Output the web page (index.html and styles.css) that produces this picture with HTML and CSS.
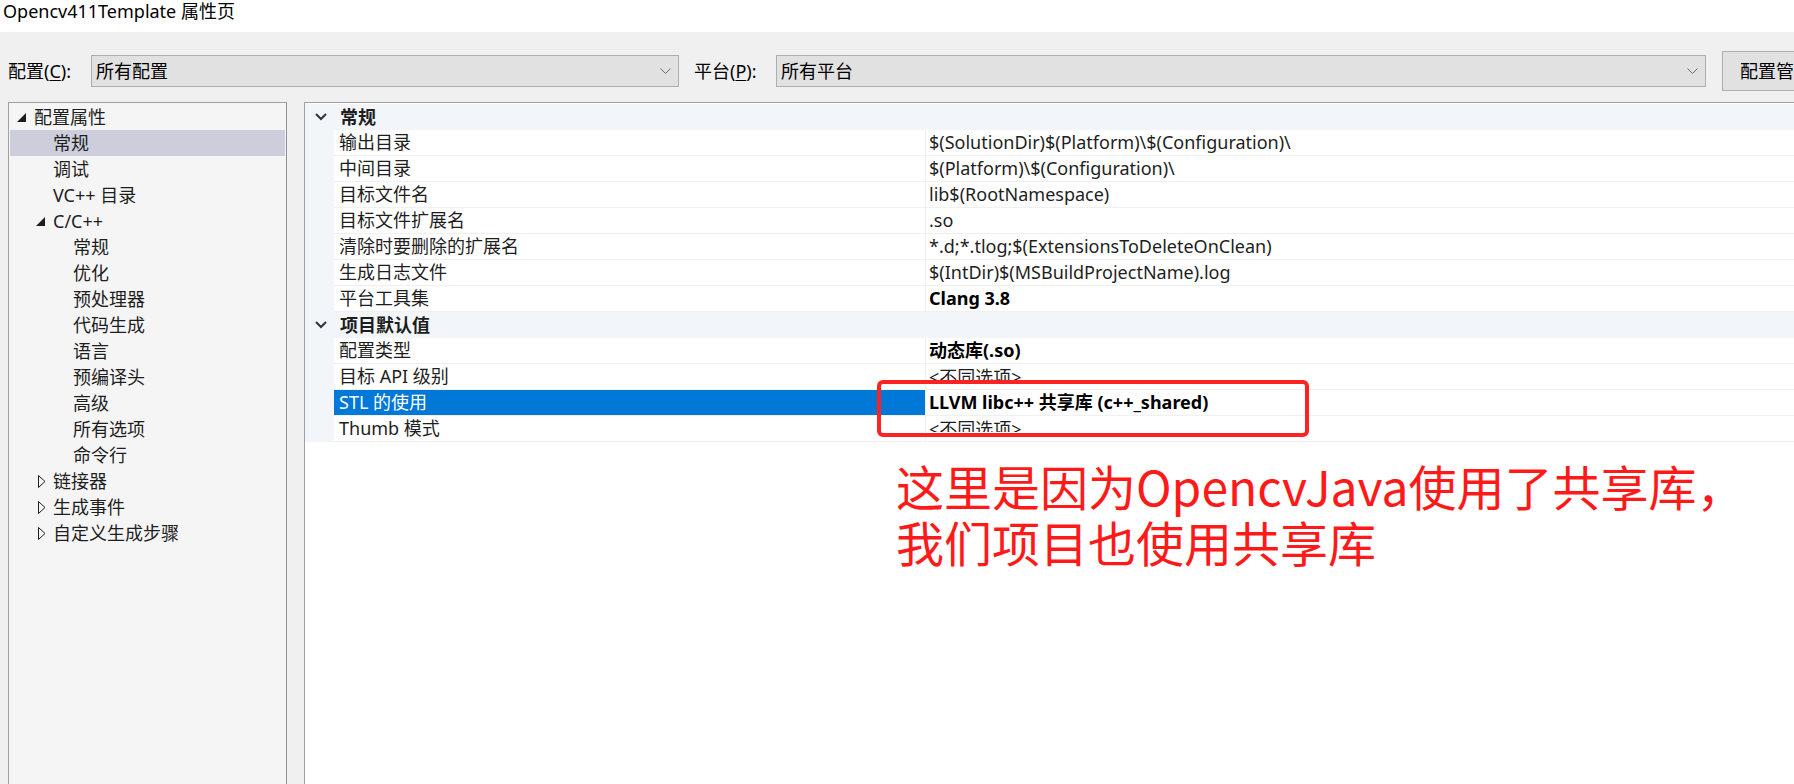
FILE: index.html
```html
<!DOCTYPE html>
<html lang="zh-CN">
<head>
<meta charset="utf-8">
<title>Opencv411Template 属性页</title>
<link rel="stylesheet" href="styles.css">
</head>
<body>
<div class="page">
  <div class="titlebar">Opencv411Template 属性页</div>

  <div class="toolbar">
    <span class="lbl lbl-config">配置(<u>C</u>):</span>
    <div class="combo combo-config">
      <span class="combo-text">所有配置</span>
      <svg class="combo-arrow" width="11" height="6" viewBox="0 0 11 6"><polyline points="0.5,0.5 5.5,5.5 10.5,0.5" fill="none" stroke="#6a6a6a" stroke-width="1"/></svg>
    </div>
    <span class="lbl lbl-plat">平台(<u>P</u>):</span>
    <div class="combo combo-plat">
      <span class="combo-text">所有平台</span>
      <svg class="combo-arrow" width="11" height="6" viewBox="0 0 11 6"><polyline points="0.5,0.5 5.5,5.5 10.5,0.5" fill="none" stroke="#6a6a6a" stroke-width="1"/></svg>
    </div>
    <div class="btn">配置管理器(<u>O</u>)...</div>
  </div>

  <div class="main">
    <div class="tree">
      <div class="trow l1"><span class="tog"><svg width="9" height="9" viewBox="0 0 9 9"><polygon points="9,0 9,9 0,9" fill="#1e1e1e"/></svg></span><span>配置属性</span></div>
      <div class="trow l2 sel"><span>常规</span></div>
      <div class="trow l2"><span>调试</span></div>
      <div class="trow l2"><span>VC++ 目录</span></div>
      <div class="trow l2t"><span class="tog"><svg width="9" height="9" viewBox="0 0 9 9"><polygon points="9,0 9,9 0,9" fill="#1e1e1e"/></svg></span><span>C/C++</span></div>
      <div class="trow l3"><span>常规</span></div>
      <div class="trow l3"><span>优化</span></div>
      <div class="trow l3"><span>预处理器</span></div>
      <div class="trow l3"><span>代码生成</span></div>
      <div class="trow l3"><span>语言</span></div>
      <div class="trow l3"><span>预编译头</span></div>
      <div class="trow l3"><span>高级</span></div>
      <div class="trow l3"><span>所有选项</span></div>
      <div class="trow l3"><span>命令行</span></div>
      <div class="trow l2c"><span class="tog"><svg width="8" height="13" viewBox="0 0 8 13"><polygon points="0.5,0.5 7,6.5 0.5,12.5" fill="none" stroke="#1e1e1e" stroke-width="1"/></svg></span><span>链接器</span></div>
      <div class="trow l2c"><span class="tog"><svg width="8" height="13" viewBox="0 0 8 13"><polygon points="0.5,0.5 7,6.5 0.5,12.5" fill="none" stroke="#1e1e1e" stroke-width="1"/></svg></span><span>生成事件</span></div>
      <div class="trow l2c"><span class="tog"><svg width="8" height="13" viewBox="0 0 8 13"><polygon points="0.5,0.5 7,6.5 0.5,12.5" fill="none" stroke="#1e1e1e" stroke-width="1"/></svg></span><span>自定义生成步骤</span></div>
    </div>

    <div class="grid">
      <div class="cat"><svg class="chev" width="12" height="8" viewBox="0 0 12 8"><polyline points="1,1 6,6 11,1" fill="none" stroke="#333" stroke-width="2"/></svg><span class="cat-text">常规</span></div>
      <div class="prow"><div class="gut"></div><div class="pname">输出目录</div><div class="pval">$(SolutionDir)$(Platform)\$(Configuration)\</div></div>
      <div class="prow"><div class="gut"></div><div class="pname">中间目录</div><div class="pval">$(Platform)\$(Configuration)\</div></div>
      <div class="prow"><div class="gut"></div><div class="pname">目标文件名</div><div class="pval">lib$(RootNamespace)</div></div>
      <div class="prow"><div class="gut"></div><div class="pname">目标文件扩展名</div><div class="pval">.so</div></div>
      <div class="prow"><div class="gut"></div><div class="pname">清除时要删除的扩展名</div><div class="pval">*.d;*.tlog;$(ExtensionsToDeleteOnClean)</div></div>
      <div class="prow"><div class="gut"></div><div class="pname">生成日志文件</div><div class="pval">$(IntDir)$(MSBuildProjectName).log</div></div>
      <div class="prow"><div class="gut"></div><div class="pname">平台工具集</div><div class="pval bold">Clang 3.8</div></div>
      <div class="cat"><svg class="chev" width="12" height="8" viewBox="0 0 12 8"><polyline points="1,1 6,6 11,1" fill="none" stroke="#333" stroke-width="2"/></svg><span class="cat-text">项目默认值</span></div>
      <div class="prow"><div class="gut"></div><div class="pname">配置类型</div><div class="pval bold">动态库(.so)</div></div>
      <div class="prow"><div class="gut"></div><div class="pname">目标 API 级别</div><div class="pval clipcell"><span class="clip">&lt;不同选项&gt;</span></div></div>
      <div class="prow"><div class="gut"></div><div class="pname selname">STL 的使用</div><div class="pval bold">LLVM libc++ 共享库 (c++_shared)</div></div>
      <div class="prow"><div class="gut"></div><div class="pname">Thumb 模式</div><div class="pval clipcell"><span class="clip">&lt;不同选项&gt;</span></div></div>
    </div>
  </div>

  <div class="annot-box"></div>
  <div class="annot-text">这里是因为OpencvJava使用了共享库，<br>我们项目也使用共享库</div>
</div>
</body>
</html>
```

FILE: styles.css
```css
* { box-sizing: border-box; }

html, body {
  margin: 0;
  padding: 0;
  background: #ffffff;
}

.page {
  position: relative;
  width: 1794px;
  height: 784px;
  overflow: hidden;
  font-family: "Noto Sans", "Noto Sans CJK SC", sans-serif;
  font-size: 18px;
  color: #1e1e1e;
}

.titlebar {
  height: 32px;
  padding-left: 3px;
  line-height: 22px;
  font-family: "Noto Sans", "Noto Sans CJK SC", sans-serif;
  font-size: 18px;
  color: #000;
  white-space: nowrap;
}

.toolbar {
  height: 70px;
  background: #f0f0f0;
  display: flex;
  align-items: center;
  padding-top: 8px;
  padding-left: 8px;
  white-space: nowrap;
  overflow: hidden;
}

.lbl {
  flex: none;
  line-height: 26px;
  color: #000;
}
.lbl u { text-decoration-thickness: 1px; text-underline-offset: 2px; }
.lbl-config { width: 83px; }
.lbl-plat { width: 82px; margin-left: 15px; }

.combo {
  height: 32px;
  background: #e1e1e1;
  border: 1px solid #adadad;
  display: flex;
  align-items: center;
  justify-content: space-between;
  padding-left: 4px;
  padding-right: 7px;
  flex: none;
}
.combo-config { width: 588px; }
.combo-plat { width: 930px; }
.combo-text { line-height: 26px; color: #000; }
.combo-arrow { display: block; margin-top: -1px; }

.btn {
  flex: none;
  margin-left: 16px;
  width: 160px;
  height: 40px;
  background: #e1e1e1;
  border: 1px solid #adadad;
  padding-left: 17px;
  line-height: 38px;
  color: #000;
}
.btn u { text-decoration-thickness: 1px; }

.main {
  height: 682px;
  background: #f0f0f0;
  display: flex;
  padding-left: 8px;
}

.tree {
  width: 279px;
  flex: none;
  background: #f5f5f5;
  border-top: 1px solid #a0a0a0;
  border-left: 1px solid #a0a0a0;
  border-right: 1px solid #8d909c;
  padding: 1px;
}

.trow {
  height: 26px;
  display: flex;
  align-items: center;
  line-height: 26px;
  white-space: nowrap;
  color: #1e1e1e;
}
.trow.sel { background: #cccedb; }
.tog { display: flex; align-items: center; flex: none; }
.tog svg { display: block; }

.l1 { padding-left: 7px; }
.l1 .tog { width: 17px; }
.l2 { padding-left: 43px; }
.l2t { padding-left: 26px; }
.l2t .tog { width: 17px; }
.l2c { padding-left: 28px; }
.l2c .tog { width: 15px; }
.l3 { padding-left: 63px; }

.grid {
  flex: 1;
  margin-left: 17px;
  background: #ffffff;
  border-top: 1px solid #a0a0a0;
  border-left: 1px solid #a0a0a0;
  padding-top: 1px;
  min-width: 0;
}

.cat {
  height: 26px;
  background: #f2f5fa;
  display: flex;
  align-items: center;
  padding-left: 10px;
  white-space: nowrap;
}
.chev { display: block; flex: none; }
.cat-text {
  margin-left: 13px;
  font-weight: 700;
  line-height: 26px;
  color: #1e1e1e;
}

.prow {
  height: 26px;
  display: flex;
  white-space: nowrap;
}
.gut {
  width: 29px;
  flex: none;
  background: #f2f5fa;
}
.pname {
  width: 591px;
  flex: none;
  padding-left: 5px;
  line-height: 25px;
  border-bottom: 1px solid #f0f0f0;
  color: #1e1e1e;
}
.pname.selname {
  background: #0078d7;
  color: #ffffff;
}
.pval {
  flex: 1;
  padding-left: 3px;
  line-height: 25px;
  border-left: 1px solid #f0f0f0;
  border-bottom: 1px solid #f0f0f0;
  color: #1e1e1e;
  overflow: hidden;
}
.pval.bold { font-weight: 700; color: #000; }

.clipcell { padding-top: 4px; }
.clip {
  display: block;
  height: 12px;
  line-height: 18px;
  overflow: hidden;
}

.annot-box {
  position: absolute;
  left: 877px;
  top: 380px;
  width: 432px;
  height: 57px;
  border: 4px solid #ff2222;
  border-radius: 6px;
}

.annot-text {
  position: absolute;
  left: 896px;
  top: 457px;
  font-family: "Noto Sans CJK SC", sans-serif;
  font-size: 48px;
  line-height: 56px;
  color: #ff1a1a;
  white-space: nowrap;
}
```
